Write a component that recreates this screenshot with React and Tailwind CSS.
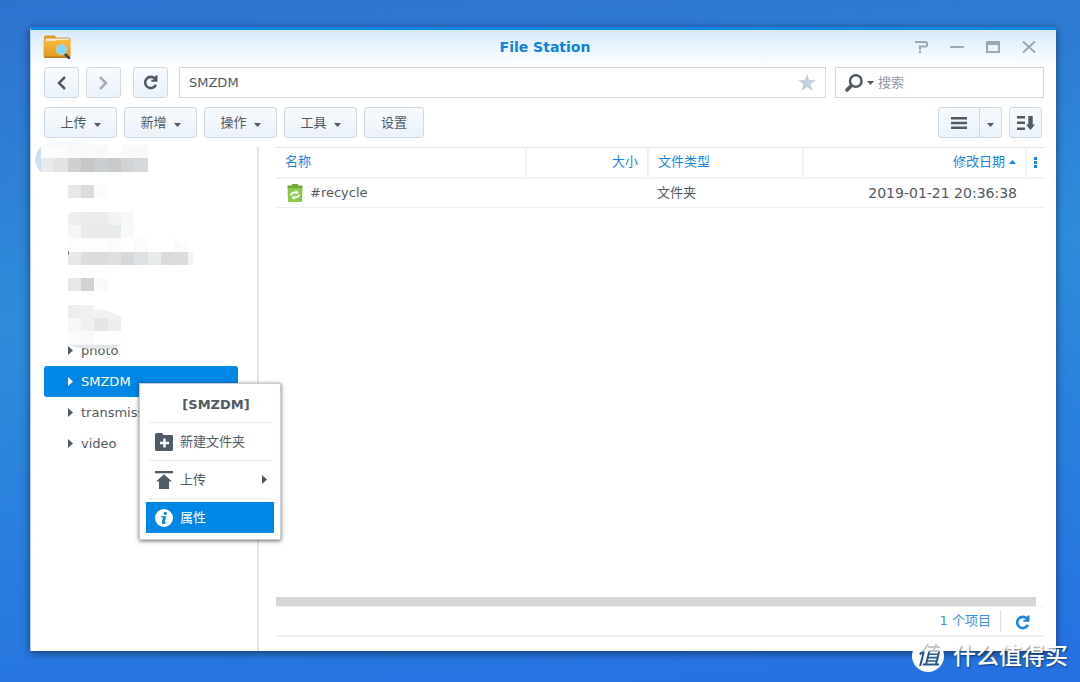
import { useState } from "react";

const TOOLS = [
  { label: "上传", menu: true },
  { label: "新增", menu: true },
  { label: "操作", menu: true },
  { label: "工具", menu: true },
  { label: "设置", menu: false },
];

const FOLDERS = ["photo", "SMZDM", "transmission", "video"];

const FILES = [{ name: "#recycle", size: "", type: "文件夹", date: "2019-01-21 20:36:38" }];

// masked folder names: [row, first column, colours]
const MOSAIC = [
  [0, 0, ["#fcfcfc", "#fcfcfc", "#f9fafa", "#f8f9f9", "#f9f9f9", "#ffffff", "#f9f9f9", "#f9f9f9"]],
  [1, 0, ["#e8eaec", "#e2e4e4", "#ced0d0", "#c6c8c8", "#c9ced1", "#c8caca", "#d2d4d3", "#d5d9dc"]],
  [3, 2, ["#e5e7e9", "#dbdddc", "#fbfbfb"]],
  [5, 2, ["#ecedef", "#ebecee", "#ebecee", "#f2f2f3", "#f8f8f8"]],
  [6, 2, ["#f4f7f6", "#e9ebea", "#e9ebea", "#e9ebea", "#f7fafc"]],
  [7, 2, ["#fdfdfd", "#fdfdfd", "#fdfdfd", "#fbfbfb", "#ffffff", "#fbfbfb", "#ffffff", "#ffffff"]],
  [8, 2, ["#e6e8ea", "#dbdcdc", "#dbdcdd", "#dfdfdf", "#d7d7d8", "#dce1e5", "#e9ebeb", "#d9dbdc", "#dcdddd"]],
  [10, 2, ["#e5e7e9", "#d2d2d0", "#f8fafb"]],
  [12, 2, ["#ecedf0", "#eff0f0"]],
  [13, 2, ["#f4f7f6", "#eff1f0", "#e6e6e7", "#edeef0"]],
  [14, 2, ["#fbfbfb", "#fafafa", "#fdfdfd", "#fdfdfd"]],
];

function Mosaic() {
  return (
    <svg
      className="absolute left-[10px] -top-[2px] w-40 h-[213px] overflow-visible pointer-events-none"
      viewBox="0 0 12 16"
      shapeRendering="crispEdges"
      aria-hidden="true"
    >
      <path d="M0 2.05Q-.45 1.6-.45 1.1Q-.4.5 0 .1Z" fill="#cfdff2" shapeRendering="auto" />
      <path d="M0 0Q2-.5 4 0Z" fill="#f1f7fc" shapeRendering="auto" />
      {MOSAIC.map(([row, col, colors]) =>
        colors.map((c, i) => <rect key={`${row}-${i}`} x={col + i} y={row} width="1" height="1" fill={c} />)
      )}
      <path d="M2 5h.3L2 5.300Z" fill="#fff" shapeRendering="auto" />
      <path d="M10 7 11 7.600V8H10Z" fill="#fafafa" shapeRendering="auto" />
      <path d="M11 8h.350q.200.500 0 1H11Z" fill="#f1f4f3" />
      <path d="M4 12.3Q5.2 12.4 6 12.9V13H4Z" fill="#f0f1f1" shapeRendering="auto" />
      <path d="M2 7.95h.1v.3H2Z" fill="#7b848d" />
      <path d="M2 15H6L5.6 15.25Q4 15.4 2.6 15.2Z" fill="#e4e6e7" shapeRendering="auto" />
    </svg>
  );
}

function CaretDown({ className = "" }) {
  return (
    <svg className={`w-[7px] h-1 ${className}`} viewBox="0 0 7 4" fill="currentColor" aria-hidden="true">
      <path d="M0 0h7L3.5 4Z" />
    </svg>
  );
}

function CaretRight({ className = "" }) {
  return (
    <svg className={`w-[5px] h-[9px] ${className}`} viewBox="0 0 5 9" fill="currentColor" aria-hidden="true">
      <path d="M0 0 5 4.5 0 9Z" />
    </svg>
  );
}

function RefreshIcon({ className }) {
  return (
    <svg className={className} viewBox="0 0 15 15" fill="none" aria-hidden="true">
      <path d="M12 3.8A5.6 5.6 0 1 0 12.9 9.800" stroke="currentColor" strokeWidth="2.6" />
      <path d="M14.500.5v6.300H8.300V4.800h2.400L12.500.5Z" fill="currentColor" />
    </svg>
  );
}

function FolderSearchIcon() {
  return (
    <svg className="w-7 h-6" viewBox="0 0 28 24" aria-hidden="true">
      <defs>
        <linearGradient id="folder" x1="0" y1="0" x2="0" y2="1">
          <stop offset="0" stopColor="#fbbb3e" />
          <stop offset="1" stopColor="#dc9a1f" />
        </linearGradient>
      </defs>
      <path d="M1 2Q1 .5 2.500.5h9L13.500 2.500H26q1.500 0 1.500 1.500V8H1Z" fill="#dc9c28" />
      <path d="M2.500 3.500h24v3h-24Z" fill="#efe6d2" />
      <path d="M.5 6H12L13.500 5H26q1.500 0 1.500 1.500V21q0 2-2 2H2.500q-2 0-2-2Z" fill="url(#folder)" />
      <path d="M.8 21.500q.4 1.500 1.900 1.500h22.500q1.600 0 2-1.500Z" fill="#b97e1b" />
      <path d="m21.500 18.500 4.500 4.500" stroke="#3f4a50" strokeWidth="2.600" strokeLinecap="round" />
      <circle cx="18.500" cy="14.500" r="5.200" fill="#7fd6fb" stroke="#c9c9a8" strokeWidth="1.200" />
    </svg>
  );
}

function RecycleBinIcon() {
  return (
    <svg className="w-4 h-[18px] shrink-0" viewBox="0 0 16 18" aria-hidden="true">
      <path d="M5 0h6v1.500h4.500V4H.5V1.500H5Z" fill="#74a832" />
      <path d="M.5 4h15l-.5 13.200q-.1.800-1 .8H2q-.9 0-1-.8Z" fill="#8bc748" />
      <path d="M4 11.500Q4.200 8.500 7.500 8.500h1.500M12 10.500Q11.800 13.500 8.500 13.500H7" stroke="#f4fbe9" strokeWidth="1.800" fill="none" />
      <path d="m8.500 6 3.500 2.400-3.500 2.300ZM7.500 11.300v4.500L4 13.600Z" fill="#f4fbe9" />
    </svg>
  );
}

function WindowControls() {
  const btn = "w-9 h-6 flex items-center justify-center text-[#9ba8b4]";
  return (
    <div className="flex justify-self-end">
      <button type="button" aria-label="帮助" className={btn}>
        <svg className="w-[14px] h-3" viewBox="0 0 14 12" fill="none" stroke="currentColor" strokeWidth="2">
          <path d="M1 1h10.500q1.500 0 1.500 1.500v1.500q0 1.500-1.500 1.500H6V9M6 10v2" />
        </svg>
      </button>
      <button type="button" aria-label="最小化" className={btn}>
        <svg className="w-[14px] h-3" viewBox="0 0 14 12" fill="none" stroke="currentColor" strokeWidth="2">
          <path d="M0 6h14" />
        </svg>
      </button>
      <button type="button" aria-label="最大化" className={btn}>
        <svg className="w-[14px] h-3" viewBox="0 0 14 12" fill="currentColor">
          <path fillRule="evenodd" d="M0 0h14v12H0ZM2 4v6h10V4Z" />
        </svg>
      </button>
      <button type="button" aria-label="关闭" className={btn}>
        <svg className="w-[14px] h-3" viewBox="0 0 14 12" fill="none" stroke="currentColor" strokeWidth="2">
          <path d="M1 .5 13 11.500M13 .5 1 11.500" />
        </svg>
      </button>
    </div>
  );
}

function ToolButton({ className = "", children, ...props }) {
  return (
    <button
      type="button"
      className={`h-[31px] flex items-center justify-center shrink-0 border border-[#cfdae6] rounded-[3px] bg-linear-to-b from-[#f7fbfe] to-[#ebf2f8] text-[#505a64] ${className}`}
      {...props}
    >
      {children}
    </button>
  );
}

function ContextMenu() {
  return (
    <div
      role="menu"
      aria-label="SMZDM"
      className="absolute left-[95px] top-[17px] z-20 w-[142px] p-[6px] bg-white border border-[#c5ced6] shadow-[0_1px_4px_rgba(0,0,0,0.6)] text-[#505a64]"
    >
      <div className="h-[33px] mx-[3px] pl-3 pb-[2px] flex items-center justify-center border-b border-[#e6ebf2] font-bold">
        [SMZDM]
      </div>
      <div className="mx-[3px] py-[3px] border-b border-[#e6ebf2]">
        <button type="button" role="menuitem" className="w-full h-[31px] pl-[6px] flex items-center gap-[7px]">
          <svg className="w-[18px] h-[18px]" viewBox="0 0 18 18" aria-hidden="true">
            <path d="M0 1.500Q0 0 1.500 0H7l1.500 2H17q1 0 1 1v13.500q0 1.500-1.500 1.500h-15Q0 18 0 16.500Z" fill="#505b66" />
            <path d="M9.500 5.500v9M5 10h9" stroke="#fff" strokeWidth="2.400" />
          </svg>
          新建文件夹
        </button>
      </div>
      <div className="mx-[3px] py-[3px] border-b border-[#e6ebf2]">
        <button type="button" role="menuitem" className="w-full h-[31px] pl-[6px] pr-1 flex items-center gap-[7px]">
          <svg className="w-[18px] h-[18px]" viewBox="0 0 18 18" fill="#505b66" aria-hidden="true">
            <path d="M0 0h18v2.300H0ZM9 3.200 17 10.500h-3V18H4v-7.500H1Z" />
          </svg>
          上传
          <CaretRight className="ml-auto" />
        </button>
      </div>
      <button type="button" role="menuitem" className="mt-[3px] w-full h-[31px] pl-[9px] flex items-center gap-[7px] bg-[#0086e5] text-white">
        <svg className="w-[18px] h-[18px]" viewBox="0 0 18 18" aria-hidden="true">
          <circle cx="9" cy="9" r="9" fill="#fff" />
          <circle cx="10.300" cy="4.300" r="1.600" fill="#0086e5" />
          <path d="M6.300 7.300h4.900L9.700 12.800q-.2.900.5.700l1.300-.6-.4 1.200q-1.600 1.200-3.200.9-1.500-.4-1-2L8 8.600H6Z" fill="#0086e5" />
        </svg>
        属性
      </button>
    </div>
  );
}

function Sidebar({ selected, onSelect }) {
  return (
    <aside className="relative w-[228px] shrink-0 pl-[13px] pt-[188px] border-r-2 border-[#e4e5e7]">
      <ul>
        {FOLDERS.map((name) => (
          <li key={name} className="relative w-[194px]">
            <button
              type="button"
              onClick={() => onSelect(name)}
              className={`w-full h-[31px] pl-6 flex items-center gap-2 rounded-[3px] ${
                name === selected ? "bg-[#0086e5] text-white" : "text-[#505a64]"
              }`}
            >
              <CaretRight />
              {name}
            </button>
            {name === "SMZDM" && <ContextMenu />}
          </li>
        ))}
      </ul>
      <Mosaic />
    </aside>
  );
}

function FileTable() {
  const th = "h-[30px] px-[9px] font-normal border-r-2 border-[#edf2f7]";
  return (
    <table className="w-full table-fixed border-t border-[#dbe5ee]">
      <thead>
        <tr className="border-b-2 border-[#eef3f8] text-[#1a85e0]">
          <th className={`${th} text-left`}>名称</th>
          <th className={`${th} w-[122px] text-right`}>大小</th>
          <th className={`${th} w-[155px] text-left`}>文件类型</th>
          <th className={`${th} w-[223px] text-right`}>
            <span className="inline-flex items-center gap-1">
              修改日期
              <CaretDown className="rotate-180" />
            </span>
          </th>
          <th className="w-[18px]">
            <button type="button" aria-label="选择列" className="block mx-auto">
              <svg className="w-[3px] h-[11px]" viewBox="0 0 3 11" fill="currentColor">
                <path d="M0 0h3v3H0ZM0 4h3v3H0ZM0 8h3v3H0Z" />
              </svg>
            </button>
          </th>
        </tr>
      </thead>
      <tbody>
        {FILES.map((f) => (
          <tr key={f.name} className="h-[30px] border-b border-[#e8eff6] text-[#505a64]">
            <td className="px-[11px]">
              <span className="flex items-center gap-[7px]">
                <RecycleBinIcon />
                {f.name}
              </span>
            </td>
            <td className="px-[9px] text-right">{f.size}</td>
            <td className="px-[9px]">{f.type}</td>
            <td className="px-[9px] text-right text-sm whitespace-nowrap">{f.date}</td>
            <td />
          </tr>
        ))}
      </tbody>
    </table>
  );
}

function Watermark() {
  return (
    <div className="absolute right-3 bottom-[10px] flex items-center gap-[9px] text-white">
      <span className="w-8 h-8 rounded-full bg-white flex items-center justify-center text-2xl leading-none italic font-medium">
        <span className="bg-linear-to-b from-[#c4c7ca] from-30% to-[#255690] to-35% bg-clip-text text-transparent">值</span>
      </span>
      <span className="text-[23px] leading-8 font-medium whitespace-nowrap [text-shadow:1px_1px_2px_rgba(0,0,0,0.5)]">什么值得买</span>
    </div>
  );
}

export default function App() {
  const [path, setPath] = useState("SMZDM");
  const [query, setQuery] = useState("");

  return (
    <div className="relative min-h-screen pt-[27px] pb-[31px] pl-[30px] pr-6 flex flex-col bg-[linear-gradient(175deg,#2e72d0,#2e8cda_42%,#2570e2)] font-['DejaVu_Sans','Noto_Sans_CJK_SC',sans-serif] text-[13px] leading-5">
      <div className="grow flex flex-col bg-white border-t-[3px] border-t-[#0086e5] border-l border-l-[#b7cfe8] shadow-[0_2px_8px_rgba(0,0,0,0.5)]">
        <header className="h-[37px] pl-3 pr-[9px] pb-[3px] grid grid-cols-[1fr_auto_1fr] items-center bg-linear-to-b from-[#d7eafb] to-white">
          <FolderSearchIcon />
          <h1 className="text-sm font-bold text-[#0f82e2]">File Station</h1>
          <WindowControls />
        </header>

        <div className="pl-[13px] pr-3 flex">
          <ToolButton aria-label="后退" className="w-[35px]">
            <svg className="w-[9px] h-[14px]" viewBox="0 0 9 14" fill="none" stroke="currentColor" strokeWidth="2.500">
              <path d="M8 1 2 7l6 6" />
            </svg>
          </ToolButton>
          <ToolButton aria-label="前进" className="w-[35px] ml-[7px]">
            <svg className="w-[9px] h-[14px]" viewBox="0 0 9 14" fill="none" stroke="#a3adb7" strokeWidth="2.500">
              <path d="m1 1 6 6-6 6" />
            </svg>
          </ToolButton>
          <ToolButton aria-label="刷新" className="w-[35px] ml-3">
            <RefreshIcon className="w-[15px] h-[15px]" />
          </ToolButton>
          <div className="grow h-[31px] ml-[11px] flex items-center border border-[#cfd9e5]">
            <input
              aria-label="路径"
              className="grow min-w-0 pl-[9px] text-[#505a64] outline-none"
              value={path}
              onChange={(e) => setPath(e.target.value)}
            />
            <button type="button" aria-label="收藏" className="w-9 flex justify-center">
              <svg className="w-[18px] h-[17px]" viewBox="0 0 18 17" fill="#c3cfdb">
                <path d="m9 0 2.200 6H18l-5.400 4.100L14.600 17 9 12.900 3.400 17l2-6.900L0 6h6.800Z" />
              </svg>
            </button>
          </div>
          <div className="w-[209px] h-[31px] ml-[9px] flex items-center border border-[#cfd9e5] text-[#505a64]">
            <button type="button" aria-label="搜索选项" className="pl-[9px] flex items-center gap-1">
              <svg className="w-[18px] h-[18px]" viewBox="0 0 18 18" fill="none" stroke="currentColor">
                <circle cx="10.800" cy="7" r="5.800" strokeWidth="2.500" />
                <path d="m6 12-4 4" strokeWidth="3.600" strokeLinecap="round" />
              </svg>
              <CaretDown />
            </button>
            <input
              aria-label="搜索"
              className="grow min-w-0 pl-1 outline-none placeholder:text-[#8f99a3]"
              placeholder="搜索"
              value={query}
              onChange={(e) => setQuery(e.target.value)}
            />
          </div>
        </div>

        <div className="mt-[9px] pl-[13px] pr-[14px] flex gap-[7px]">
          {TOOLS.map((t) => (
            <ToolButton key={t.label} className={t.menu ? "w-[73px] gap-[7px]" : "w-[60px]"}>
              {t.label}
              {t.menu && <CaretDown className="mt-1" />}
            </ToolButton>
          ))}
          <div className="ml-auto flex">
            <ToolButton aria-label="列表视图" className="w-[42px] rounded-r-none">
              <svg className="w-4 h-3" viewBox="0 0 16 12" fill="currentColor">
                <path d="M0 0h16v2.500H0ZM0 4.700h16v2.500H0ZM0 9.500h16V12H0Z" />
              </svg>
            </ToolButton>
            <ToolButton aria-label="更改视图" className="w-[22px] border-l-0 rounded-l-none">
              <CaretDown className="mt-1" />
            </ToolButton>
          </div>
          <ToolButton aria-label="排序" className="w-[33px]">
            <svg className="w-[18px] h-[14px]" viewBox="0 0 18 14" fill="currentColor">
              <path d="M0 0h8v2.500H0ZM0 5.500h8V8H0ZM0 11.500h8V14H0ZM11.300 0h4.400v8.500H18L13.500 14 9 8.500h2.300Z" />
            </svg>
          </ToolButton>
        </div>

        <div className="grow mt-[9px] flex">
          <Sidebar selected={path} onSelect={setPath} />
          <main className="grow min-w-0 pl-[17px] pr-3 pb-[14px] flex flex-col">
            <FileTable />
            <div className="mt-auto mr-2 h-[9px] bg-[#d4d5d7]" />
            <footer className="h-[31px] flex items-center justify-end border-t border-b-2 border-t-[#eff3f7] border-b-[#e8eef4] text-[#3a8fe0]">
              1 个项目
              <span className="w-px h-[22px] ml-[9px] bg-[#dbe4ed]" />
              <button type="button" aria-label="刷新列表" className="px-[14px] pt-[2px] text-[#1a85e0]">
                <RefreshIcon className="w-[15px] h-[15px]" />
              </button>
            </footer>
          </main>
        </div>
      </div>
      <Watermark />
    </div>
  );
}
